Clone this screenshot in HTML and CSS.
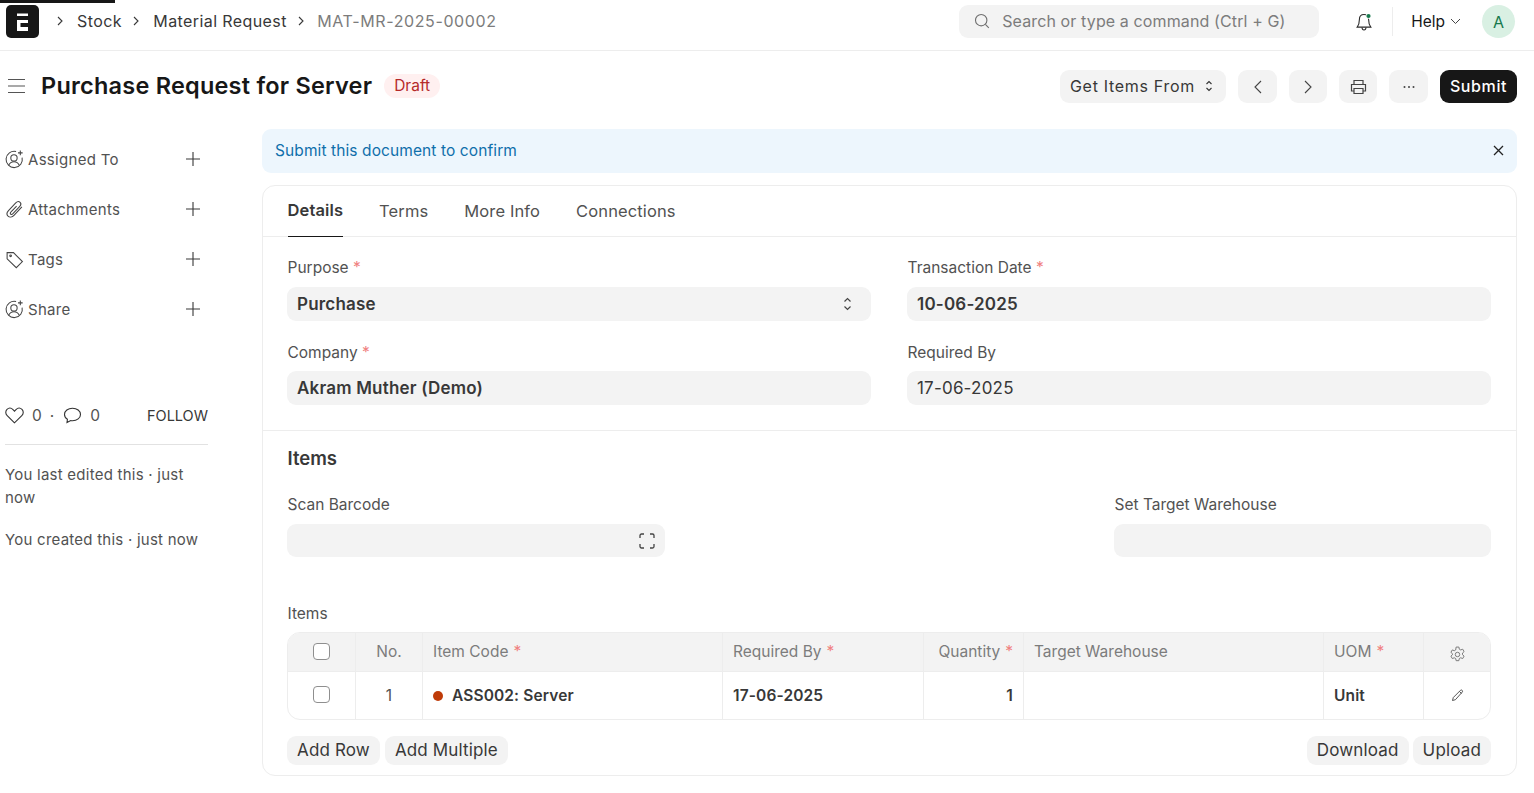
FILE: index.html
```html
<!DOCTYPE html>
<html lang="en">
<head>
  <meta charset="UTF-8">
  <title>Purchase Request for Server</title>
  <link rel="stylesheet" href="styles.css">
</head>
<body>

<div class="loadbar"></div>

<header class="navbar">
  <div class="logo"><svg width="33" height="33" viewBox="0 0 33 33" fill="#fff"><path d="M11 8.500h11V11H11zM11 15h11v3h-7.500v4H22v4H11z"/></svg></div>
  <nav class="crumbs">
    <svg class="chev" viewBox="0 0 8 12"><path d="M2 2l4 4-4 4"/></svg>
    <span class="crumb">Stock</span>
    <svg class="chev" viewBox="0 0 8 12"><path d="M2 2l4 4-4 4"/></svg>
    <span class="crumb">Material Request</span>
    <svg class="chev" viewBox="0 0 8 12"><path d="M2 2l4 4-4 4"/></svg>
    <span class="crumb muted">MAT-MR-2025-00002</span>
  </nav>
  <div class="nav-right">
    <div class="search">
      <svg width="16" height="16" viewBox="0 0 16 16" fill="none" stroke="#6f6f6f" stroke-width="1.100"><circle cx="7.200" cy="7.200" r="5.700"/><path d="M11.400 11.400l3.400 3.400"/></svg>
      <span>Search or type a command (Ctrl + G)</span>
    </div>
    <div class="bell">
      <svg width="18" height="20" viewBox="0 0 18 20" fill="none" stroke="#2b2b2b" stroke-width="1.100"><path d="M9 2.500c-3 0-4.600 2.300-4.600 5 0 3.500-.6 5.400-2.200 7.600h13.600c-1.600-2.200-2.200-4.100-2.200-7.600 0-2.700-1.600-5-4.600-5z"/><path d="M7 15.500c.1 1.500 1 2.500 2 2.500s1.900-1 2-2.500"/><circle cx="13.500" cy="4" r="2.800" fill="#fff" stroke="none"/><circle cx="13.500" cy="4" r="2.100" fill="#16794c" stroke="none"/></svg>
    </div>
    <div class="nav-sep"></div>
    <div class="help">Help <svg width="11" height="7" viewBox="0 0 11 7" fill="none" stroke="#444" stroke-width="1"><path d="M1 1l4.500 4.500L10 1"/></svg></div>
    <div class="avatar">A</div>
  </div>
</header>

<div class="pagehead">
  <div class="title-wrap">
    <svg class="menu-icon" width="17" height="16" viewBox="0 0 17 16" stroke="#555" stroke-width="1.100"><path d="M0 1.500h17M0 8h17M0 14.500h17"/></svg>
    <h1>Purchase Request for Server</h1>
    <span class="pill">Draft</span>
  </div>
  <div class="actions">
    <button class="btn btn-getitems">Get Items From
      <svg width="8" height="14" viewBox="0 0 8 14" fill="none" stroke="#333" stroke-width="1.100"><path d="M1.500 5L4 2.500 6.500 5M1.500 9L4 11.500 6.500 9"/></svg>
    </button>
    <button class="btn btn-icon"><svg width="10" height="16" viewBox="0 0 10 16" fill="none" stroke="#444" stroke-width="1.100"><path d="M8 2L2 8l6 6"/></svg></button>
    <button class="btn btn-narrow"><svg width="10" height="16" viewBox="0 0 10 16" fill="none" stroke="#444" stroke-width="1.100"><path d="M2 2l6 6-6 6"/></svg></button>
    <button class="btn btn-narrow"><svg width="17" height="16" viewBox="0 0 17 16" fill="none" stroke="#444" stroke-width="1.200"><path d="M4 5V1.500h9V5M4 12H1.500V5.500h14V12H13"/><path d="M4 9.500h9v5H4z"/></svg></button>
    <button class="btn btn-icon"><svg width="14" height="4" viewBox="0 0 14 4" fill="#444"><circle cx="2.500" cy="2" r="1"/><circle cx="7" cy="2" r="1"/><circle cx="11.500" cy="2" r="1"/></svg></button>
    <button class="btn btn-dark">Submit</button>
  </div>
</div>

<div class="layout">
  <aside class="sidebar">
    <div class="side-row">
      <svg class="side-icon" viewBox="0 0 18 18" fill="none" stroke="#444" stroke-width="1"><path d="M10.500 1.500A7.700 7.700 0 1 0 16.200 7.200"/><circle cx="8.500" cy="7.500" r="3"/><path d="M3.500 14.500c1-2.300 2.800-3.400 5-3.400s4 1.100 5 3.400"/><path d="M14.500 .5v4.400M12.300 2.700h4.400"/></svg>
      <span>Assigned To</span>
      <svg class="plus" viewBox="0 0 16 16"><path d="M8 1v14M1 8h14"/></svg>
    </div>
    <div class="side-row">
      <svg class="side-icon" viewBox="0 0 18 18" fill="none" stroke="#444" stroke-width="1"><path d="M16 6.500l-7.500 8c-1.700 1.800-4.200 2.100-5.600.8-1.300-1.300-1.200-3.600.4-5.300l6.900-7.300c1.300-1.300 3.100-1.500 4.100-.5 1 1 .8 2.800-.5 4.100l-6.300 6.700c-.7.700-1.600.9-2.100.4-.5-.5-.4-1.400.3-2.100l5.300-5.600"/></svg>
      <span>Attachments</span>
      <svg class="plus" viewBox="0 0 16 16"><path d="M8 1v14M1 8h14"/></svg>
    </div>
    <div class="side-row">
      <svg class="side-icon" viewBox="0 0 18 18" fill="none" stroke="#444" stroke-width="1"><path d="M2 2.500h6l8.500 8.500-5.800 5.800L2 8.300z"/><circle cx="5.300" cy="5.500" r=".8"/></svg>
      <span>Tags</span>
      <svg class="plus" viewBox="0 0 16 16"><path d="M8 1v14M1 8h14"/></svg>
    </div>
    <div class="side-row">
      <svg class="side-icon" viewBox="0 0 18 18" fill="none" stroke="#444" stroke-width="1"><path d="M10.500 1.500A7.700 7.700 0 1 0 16.200 7.200"/><circle cx="8.500" cy="7.500" r="3"/><path d="M3.500 14.500c1-2.300 2.800-3.400 5-3.400s4 1.100 5 3.400"/><path d="M14.500 .5v4.400M12.300 2.700h4.400"/></svg>
      <span>Share</span>
      <svg class="plus" viewBox="0 0 16 16"><path d="M8 1v14M1 8h14"/></svg>
    </div>

    <div class="social">
      <svg width="19" height="17" viewBox="0 0 19 17" fill="none" stroke="#333" stroke-width="1.100"><path d="M9.500 15.800L2.200 8.600C.3 6.700.4 4 2 2.400c1.700-1.600 4.300-1.500 6 .2l1.500 1.500L11 2.600c1.700-1.700 4.300-1.800 6-.2 1.600 1.600 1.700 4.300-.2 6.200z"/></svg>
      <span class="count">0</span>
      <span class="middot">·</span>
      <svg width="19" height="17" viewBox="0 0 19 17" fill="none" stroke="#333" stroke-width="1.100"><path d="M9.500 1.200c-4.500 0-8 2.700-8 6.300 0 2 1.100 3.700 2.900 4.800L4 15.500l3.700-2c.6.100 1.200.2 1.800.2 4.500 0 8-2.700 8-6.200s-3.500-6.300-8-6.300z"/></svg>
      <span class="count">0</span>
      <span class="follow">FOLLOW</span>
    </div>
    <div class="activity">
      <p>You last edited this · just now</p>
      <p>You created this · just now</p>
    </div>
  </aside>

  <main class="content">
    <div class="alert">
      <span>Submit this document to confirm</span>
      <svg width="11" height="11" viewBox="0 0 11 11" stroke="#222" stroke-width="1.300"><path d="M1 1l9 9M10 1l-9 9"/></svg>
    </div>

    <section class="card">
      <div class="tabs">
        <span class="tab active">Details</span>
        <span class="tab">Terms</span>
        <span class="tab">More Info</span>
        <span class="tab">Connections</span>
      </div>

      <div class="form-top">
        <div class="field">
          <label>Purpose <em>*</em></label>
          <div class="input strong">Purchase
            <svg width="9" height="16" viewBox="0 0 9 16" fill="none" stroke="#444" stroke-width="1.200"><path d="M1.500 5.500L4.500 2.500l3 3M1.500 10.500l3 3 3-3"/></svg>
          </div>
        </div>
        <div class="field">
          <label>Transaction Date <em>*</em></label>
          <div class="input strong">10-06-2025</div>
        </div>
        <div class="field lower">
          <label>Company <em>*</em></label>
          <div class="input strong">Akram Muther (Demo)</div>
        </div>
        <div class="field lower">
          <label>Required By</label>
          <div class="input">17-06-2025</div>
        </div>
      </div>

      <div class="form-items">
        <h2>Items</h2>
        <div class="three-col">
          <div class="field">
            <label>Scan Barcode</label>
            <div class="input short">
              <span></span>
              <svg width="16" height="16" viewBox="0 0 16 16" fill="none" stroke="#444" stroke-width="1.300"><path d="M1 5V2.500A1.500 1.500 0 0 1 2.500 1H5M11 1h2.500A1.500 1.500 0 0 1 15 2.500V5M15 11v2.500a1.500 1.500 0 0 1-1.500 1.500H11M5 15H2.500A1.500 1.500 0 0 1 1 13.500V11"/></svg>
            </div>
          </div>
          <div></div>
          <div class="field">
            <label>Set Target Warehouse</label>
            <div class="input short"></div>
          </div>
        </div>

        <div class="grid-label">Items</div>
        <div class="grid">
          <div class="grid-row grid-head">
            <div class="cell center"><span class="check"></span></div>
            <div class="cell center">No.</div>
            <div class="cell">Item Code <em>*</em></div>
            <div class="cell">Required By <em>*</em></div>
            <div class="cell right">Quantity <em>*</em></div>
            <div class="cell">Target Warehouse</div>
            <div class="cell">UOM <em>*</em></div>
            <div class="cell center"><svg class="gear" width="17" height="17" viewBox="0 0 16 16" fill="none" stroke="#777" stroke-width=".9"><circle cx="8" cy="8" r="2.100"/><path d="M6.700 1h2.600l.4 2 1.300.7 1.900-.7 1.300 2.300-1.500 1.300v1.600l1.500 1.300-1.300 2.300-1.900-.7-1.300.7-.4 2H6.700l-.4-2-1.300-.7-1.900.7-1.300-2.300 1.500-1.300V7.300L1.800 6l1.300-2.300 1.900.7 1.300-.7z"/></svg></div>
          </div>
          <div class="grid-row grid-body">
            <div class="cell center"><span class="check"></span></div>
            <div class="cell center num">1</div>
            <div class="cell strong"><span class="dot"></span>ASS002: Server</div>
            <div class="cell strong">17-06-2025</div>
            <div class="cell right strong">1</div>
            <div class="cell"></div>
            <div class="cell strong">Unit</div>
            <div class="cell center"><svg width="13" height="13" viewBox="0 0 13 13" fill="none" stroke="#444" stroke-width=".9"><path d="M1.500 11.500l.8-3L9.500 1.300c.5-.5 1.200-.4 1.700.1s.5 1.200.1 1.600L4.400 10.700z"/><path d="M8.500 2.500l2 2"/></svg></div>
          </div>
        </div>

        <div class="grid-actions">
          <div class="btn-group">
            <button class="btn-small">Add Row</button>
            <button class="btn-small">Add Multiple</button>
          </div>
          <div class="btn-group">
            <button class="btn-small">Download</button>
            <button class="btn-small">Upload</button>
          </div>
        </div>
      </div>
    </section>
  </main>
</div>

</body>
</html>
```

FILE: styles.css
```css
* {
  box-sizing: border-box;
}

html, body {
  margin: 0;
  padding: 0;
  background: #fff;
  font-family: Inter, 'Noto Sans', sans-serif;
  font-size: 16px;
  color: #383838;
}

button {
  font-family: inherit;
  border: 0;
  cursor: pointer;
}

.loadbar {
  position: absolute;
  top: 0;
  left: 0;
  width: 115px;
  height: 3px;
  background: #171717;
}

/* top bar */
.navbar {
  display: flex;
  align-items: center;
  height: 51px;
  padding: 0 19px 7px 6px;
  border-bottom: 1px solid #ededed;
}

.logo {
  display: flex;
  width: 33px;
  height: 33px;
  border-radius: 5px;
  background: #171717;
}

.crumbs {
  display: flex;
  align-items: center;
  margin-left: 17px;
  margin-bottom: 2px;
  font-size: 16px;
  letter-spacing: .4px;
}

.chev {
  width: 8px;
  height: 12px;
  margin-right: 13px;
  fill: none;
  stroke: #383838;
  stroke-width: 1.100;
}

.crumb {
  margin-right: 10.500px;
}

.crumb.muted {
  color: #7c7c7c;
  margin-left: -1px;
  letter-spacing: .6px;
}

.nav-right {
  display: flex;
  align-items: center;
  margin-left: auto;
}

.search {
  display: flex;
  align-items: center;
  gap: 12px;
  width: 360px;
  height: 33px;
  padding-left: 15px;
  padding-bottom: 1px;
  border-radius: 9px;
  background: #f3f3f3;
  color: #7c7c7c;
  letter-spacing: .12px;
}

.bell {
  display: flex;
  margin-left: 36px;
}

.nav-sep {
  width: 1px;
  height: 29px;
  margin-left: 19px;
  background: #ededed;
}

.help {
  display: flex;
  align-items: center;
  gap: 5px;
  margin-left: 18px;
  color: #171717;
  font-size: 15.500px;
}

.avatar {
  display: flex;
  align-items: center;
  justify-content: center;
  width: 33px;
  height: 33px;
  margin-left: 21px;
  border-radius: 50%;
  background: #d9f0e3;
  color: #16794c;
}

/* page head */
.pagehead {
  display: flex;
  align-items: center;
  justify-content: space-between;
  height: 78px;
  padding: 0 17px 7px 8px;
}

.title-wrap {
  display: flex;
  align-items: center;
  margin-bottom: 2px;
}

.menu-icon {
  margin-right: 16px;
}

h1 {
  margin: 0;
  font-size: 23.500px;
  font-weight: 600;
  letter-spacing: .22px;
  color: #171717;
}

.pill {
  margin-left: 12px;
  padding: 2px 10px;
  border-radius: 12px;
  background: #fff0f0;
  color: #b52a2a;
  font-size: 15.500px;
  line-height: 20px;
}

.actions {
  display: flex;
  align-items: center;
  gap: 12px;
}

.btn {
  display: flex;
  align-items: center;
  justify-content: center;
  height: 33px;
  border-radius: 9px;
  background: #f3f3f3;
  color: #383838;
  font-size: 16px;
}

.btn-getitems {
  gap: 10px;
  width: 166px;
  padding: 0 3px 2px 0;
  letter-spacing: .7px;
}

.btn-icon {
  width: 39px;
}

.btn-narrow {
  width: 38px;
}

.btn-dark {
  width: 77px;
  padding-bottom: 2px;
  background: #171717;
  color: #fff;
  font-weight: 500;
  letter-spacing: .6px;
}

/* page body */
.layout {
  display: flex;
  padding: 0 17px 17px 5px;
}

.sidebar {
  width: 203px;
  margin-right: 54px;
  padding-top: 5px;
}

.side-row {
  display: flex;
  align-items: center;
  height: 50px;
  font-size: 15px;
  letter-spacing: .3px;
  color: #525252;
}

.side-icon {
  width: 19px;
  height: 19px;
  margin-right: 4px;
}

.plus {
  width: 16px;
  height: 16px;
  margin-left: auto;
  margin-right: 7px;
  fill: none;
  stroke: #383838;
  stroke-width: 1.100;
}

.social {
  display: flex;
  align-items: center;
  height: 20px;
  margin-top: 71px;
  font-size: 15.500px;
  color: #525252;
}

.count {
  margin-left: 8px;
}

.middot {
  margin: 0 9px 0 8px;
}

.follow {
  margin-left: auto;
  font-size: 14.500px;
  color: #383838;
}

.activity {
  margin-top: 19px;
  padding-top: 18px;
  border-top: 1px solid #e2e2e2;
  color: #525252;
  font-size: 15px;
  letter-spacing: .24px;
  line-height: 23px;
}

.activity p {
  margin: 0 0 19px;
}

.content {
  flex: 1;
  min-width: 0;
}

.alert {
  display: flex;
  align-items: center;
  justify-content: space-between;
  height: 44px;
  padding: 0 13px 2px;
  border-radius: 9px;
  background: #edf6fd;
  color: #0f6fab;
  font-size: 15.500px;
  letter-spacing: .1px;
}

.card {
  margin-top: 12px;
  border: 1px solid #ededed;
  border-radius: 13px;
}

.tabs {
  display: flex;
  gap: 36px;
  height: 51px;
  padding: 0 24.500px;
  border-bottom: 1px solid #ededed;
}

.tab {
  display: flex;
  align-items: center;
  height: 51px;
  padding-bottom: 2px;
  color: #525252;
  font-size: 16.500px;
  letter-spacing: .12px;
}

.tab.active {
  border-bottom: 1px solid #171717;
  color: #383838;
  font-weight: 600;
  padding-bottom: 3px;
}

.form-top {
  display: grid;
  grid-template-columns: 1fr 1fr;
  gap: 20px 36px;
  padding: 20px 25px 25px 24px;
  border-bottom: 1px solid #ededed;
}

.field label {
  display: block;
  margin-bottom: 8px;
  margin-left: .5px;
  font-size: 15.500px;
  line-height: 22px;
  color: #525252;
}

.field.lower label {
  margin-top: 1px;
  margin-bottom: 7px;
}

em {
  font-style: normal;
  color: #f08080;
}

.input {
  display: flex;
  align-items: center;
  justify-content: space-between;
  height: 34px;
  padding: 0 19px 0 10px;
  border-radius: 9px;
  background: #f3f3f3;
  font-size: 17px;
  letter-spacing: .2px;
  color: #383838;
}

.input.strong {
  font-weight: 600;
}

.input.short {
  height: 33px;
  padding-right: 10px;
}

.form-items {
  padding: 15px 25px 10px 24px;
}

h2 {
  margin: 0 0 0 .5px;
  font-size: 18.500px;
  font-weight: 600;
  line-height: 24px;
  color: #383838;
}

.three-col {
  display: grid;
  grid-template-columns: 378px 1fr 377px;
  gap: 36px;
  margin-top: 24px;
}

.grid-label {
  margin-top: 46px;
  margin-left: .5px;
  font-size: 15.500px;
  line-height: 22px;
  color: #525252;
}

.grid {
  margin-top: 7px;
  border: 1px solid #ededed;
  border-radius: 13px;
  overflow: hidden;
}

.grid-row {
  display: grid;
  grid-template-columns: 68px 67px 300px 201px 100px 300px 100px 1fr;
}

.grid-head {
  height: 39px;
  background: #f3f3f3;
  border-bottom: 1px solid #ededed;
  color: #7c7c7c;
  font-size: 15.500px;
}

.grid-head .cell {
  padding-bottom: 2px;
}

.grid-body {
  height: 47px;
  font-size: 15.500px;
  letter-spacing: .12px;
}

.cell {
  display: flex;
  align-items: center;
  padding: 0 10px;
  border-right: 1px solid #ededed;
}

.cell:last-child {
  border-right: 0;
}

.cell.center {
  justify-content: center;
}

.cell.right {
  justify-content: flex-end;
}

.cell.strong {
  font-weight: 600;
}

.cell.num {
  font-weight: 400;
  color: #525252;
}

.cell em {
  margin-left: 5px;
}

.gear {
  margin-top: 6px;
}

.check {
  width: 17px;
  height: 17px;
  border: 1px solid #8f8f8f;
  border-radius: 4px;
  background: #fff;
}

.grid-body .check {
  margin-bottom: 2px;
}

.dot {
  width: 10px;
  height: 10px;
  margin-right: 9px;
  border-radius: 50%;
  background: #bf3b08;
}

.grid-actions {
  display: flex;
  justify-content: space-between;
  margin-top: 16px;
}

.btn-group {
  display: flex;
  gap: 5px;
}

.btn-group:last-child {
  gap: 4px;
}

.btn-small {
  height: 29px;
  padding: 0 10px 2px;
  border-radius: 9px;
  background: #f3f3f3;
  color: #383838;
  font-size: 17px;
  letter-spacing: .15px;
}
```
